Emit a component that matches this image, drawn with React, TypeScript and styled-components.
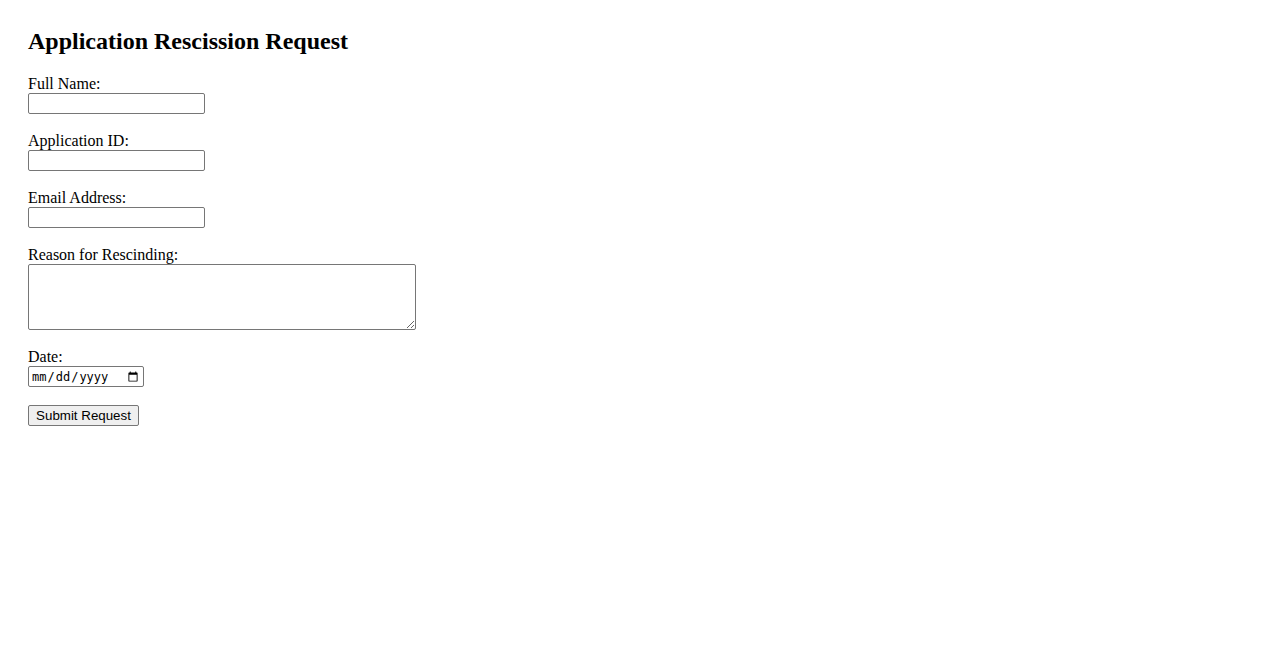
import React from "react";
import styled, { createGlobalStyle } from "styled-components";

const Global = createGlobalStyle`
  html, body { background: #fff; }
  body {
    margin: 8px;
    font-family: "Liberation Serif", "Times New Roman", serif;
    font-size: 16px;
    color: #000;
  }
`;

const Page = styled.div`
  padding: 20px;
`;

const Title = styled.h2`
  margin: 0 0 20px;
  font-size: 24px;
  font-weight: bold;
  line-height: 27px;
`;

const Form = styled.form`
  display: flex;
  flex-direction: column;
  align-items: flex-start;
`;

const Group = styled.div`
  display: flex;
  flex-direction: column;
  align-items: flex-start;
  margin-bottom: 18px;
`;

const Label = styled.label`
  display: block;
  height: 18px;
  line-height: 18px;
`;

const TextInput = styled.input`
  box-sizing: border-box;
  width: 177px;
  height: 21px;
  margin: 0;
  padding: 1px 2px;
  border: 1px solid #767676;
  border-radius: 2px;
  font-family: "Liberation Sans", Arial, sans-serif;
  font-size: 13.333px;
  background: #fff;
`;

const DateInput = styled.input`
  box-sizing: border-box;
  width: 116px;
  height: 21px;
  margin: 0;
  padding: 1px 2px;
  border: 1px solid #767676;
  border-radius: 2px;
  font-family: "DejaVu Sans Mono", "Liberation Mono", monospace;
  font-size: 12px;
  background: #fff;
`;

const TextArea = styled.textarea`
  box-sizing: border-box;
  width: 388px;
  height: 66px;
  margin: 0;
  padding: 2px;
  border: 1px solid #767676;
  border-radius: 2px;
  font-family: "Liberation Mono", monospace;
  font-size: 13.333px;
`;

const Button = styled.button`
  box-sizing: border-box;
  height: 21px;
  width: 111px;
  margin: 0;
  padding: 1px 6px;
  border: 1px solid #767676;
  border-radius: 2px;
  background: #efefef;
  font-family: "Liberation Sans", Arial, sans-serif;
  font-size: 13.333px;
  color: #000;
  line-height: 17px;
`;

export default function App() {
  return (
    <>
      <Global />
      <Page>
        <Title>Application Rescission Request</Title>
        <Form onSubmit={(e) => e.preventDefault()}>
          <Group>
            <Label htmlFor="name">Full Name:</Label>
            <TextInput id="name" type="text" />
          </Group>
          <Group>
            <Label htmlFor="appid">Application ID:</Label>
            <TextInput id="appid" type="text" />
          </Group>
          <Group>
            <Label htmlFor="email">Email Address:</Label>
            <TextInput id="email" type="email" />
          </Group>
          <Group>
            <Label htmlFor="reason">Reason for Rescinding:</Label>
            <TextArea id="reason" />
          </Group>
          <Group>
            <Label htmlFor="date">Date:</Label>
            <DateInput id="date" type="date" />
          </Group>
          <Button type="submit">Submit Request</Button>
        </Form>
      </Page>
    </>
  );
}
